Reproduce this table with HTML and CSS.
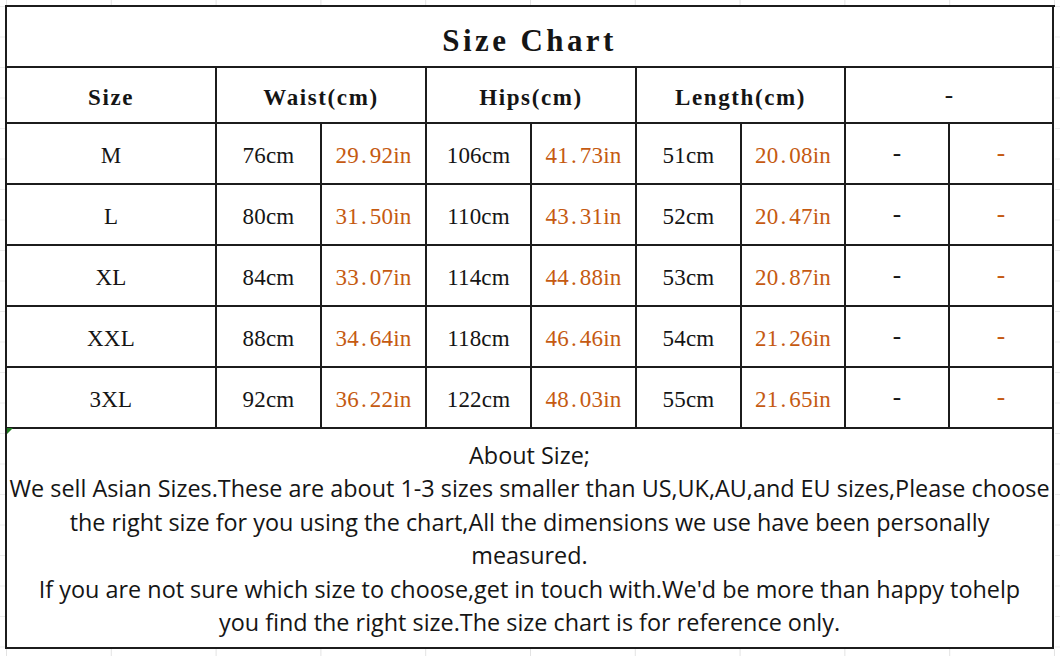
FILE: index.html
```html
<!DOCTYPE html>
<html lang="en">
<head>
<meta charset="utf-8">
<title>Size Chart</title>
<link rel="stylesheet" href="styles.css">
</head>
<body>
<div class="sheet">
  <div class="chart">
    <div class="cell title span10">Size Chart</div>

    <div class="cell head span2">Size</div>
    <div class="cell head span2">Waist(cm)</div>
    <div class="cell head span2">Hips(cm)</div>
    <div class="cell head span2">Length(cm)</div>
    <div class="cell head dash span2">-</div>

    <div class="cell size span2">M</div>
    <div class="cell num">76cm</div><div class="cell num in">29<span class="dot">.</span>92in</div>
    <div class="cell num">106cm</div><div class="cell num in">41<span class="dot">.</span>73in</div>
    <div class="cell num">51cm</div><div class="cell num in">20<span class="dot">.</span>08in</div>
    <div class="cell num dash">-</div><div class="cell num dash in">-</div>

    <div class="cell size span2">L</div>
    <div class="cell num">80cm</div><div class="cell num in">31<span class="dot">.</span>50in</div>
    <div class="cell num">110cm</div><div class="cell num in">43<span class="dot">.</span>31in</div>
    <div class="cell num">52cm</div><div class="cell num in">20<span class="dot">.</span>47in</div>
    <div class="cell num dash">-</div><div class="cell num dash in">-</div>

    <div class="cell size span2">XL</div>
    <div class="cell num">84cm</div><div class="cell num in">33<span class="dot">.</span>07in</div>
    <div class="cell num">114cm</div><div class="cell num in">44<span class="dot">.</span>88in</div>
    <div class="cell num">53cm</div><div class="cell num in">20<span class="dot">.</span>87in</div>
    <div class="cell num dash">-</div><div class="cell num dash in">-</div>

    <div class="cell size span2">XXL</div>
    <div class="cell num">88cm</div><div class="cell num in">34<span class="dot">.</span>64in</div>
    <div class="cell num">118cm</div><div class="cell num in">46<span class="dot">.</span>46in</div>
    <div class="cell num">54cm</div><div class="cell num in">21<span class="dot">.</span>26in</div>
    <div class="cell num dash">-</div><div class="cell num dash in">-</div>

    <div class="cell size span2">3XL</div>
    <div class="cell num">92cm</div><div class="cell num in">36<span class="dot">.</span>22in</div>
    <div class="cell num">122cm</div><div class="cell num in">48<span class="dot">.</span>03in</div>
    <div class="cell num">55cm</div><div class="cell num in">21<span class="dot">.</span>65in</div>
    <div class="cell num dash">-</div><div class="cell num dash in">-</div>

    <div class="cell notes span10">
      <span class="marker"></span>
      <p class="line">About Size;</p>
      <p class="line">We sell Asian Sizes.These are about 1-3 sizes smaller than US,UK,AU,and EU sizes,Please choose</p>
      <p class="line">the right size for you using the chart,All the dimensions we use have been personally</p>
      <p class="line">measured.</p>
      <p class="line">If you are not sure which size to choose,get in touch with.We'd be more than happy tohelp</p>
      <p class="line">you find the right size.The size chart is for reference only.</p>
    </div>
  </div>
</div>
</body>
</html>
```

FILE: styles.css
```css
html, body {
  margin: 0;
  padding: 0;
}

body {
  width: 1060px;
  height: 656px;
  overflow: hidden;
  background-color: #ffffff;
  background-image:
    linear-gradient(to right, #e3e3e3 1px, transparent 1px),
    linear-gradient(to bottom, #ececec 1px, transparent 1px);
  background-size: 104.8px 100%, 100% 30.5px;
  background-position: 6px 0, 0 6px;
  color: #151515;
}

.sheet {
  padding: 5px 0 0 5px;
}

.chart {
  display: grid;
  grid-template-columns: repeat(7, 105px) repeat(3, 104px);
  grid-template-rows: 61px 56px repeat(5, 61px) 220px;
  width: 1048px;
  border-left: 2px solid #1c1c1c;
  border-top: 2px solid #1c1c1c;
  background: #ffffff;
}

.cell {
  box-sizing: border-box;
  border-right: 2px solid #1c1c1c;
  border-bottom: 2px solid #1c1c1c;
  display: flex;
  align-items: center;
  justify-content: center;
  white-space: nowrap;
  background: #ffffff;
}

.span2 { grid-column: span 2; }
.span10 { grid-column: span 10; }

.title {
  font-family: "Liberation Serif", "Times New Roman", serif;
  font-weight: bold;
  font-size: 31px;
  letter-spacing: 3.4px;
  padding-top: 8px;
}

.head {
  font-family: "Liberation Serif", "Times New Roman", serif;
  font-weight: bold;
  font-size: 23px;
  letter-spacing: 1.6px;
  padding-top: 6px;
}

.size,
.num {
  font-family: "Liberation Serif", "Times New Roman", serif;
  font-size: 23px;
  letter-spacing: 0.2px;
  padding-top: 5px;
}

.cell.dash {
  font-family: "Liberation Mono", "Courier New", monospace;
  font-weight: normal;
  font-size: 24px;
  letter-spacing: 0;
  padding-top: 2px;
}

.dot {
  margin: 0 3px 0 2px;
}

.in {
  color: #c55a11;
}

.notes {
  position: relative;
  flex-direction: column;
  justify-content: center;
  font-family: "Open Sans", "Noto Sans", sans-serif;
  font-size: 23.4px;
  padding-top: 2px;
}

.line {
  margin: 0;
  line-height: 33.5px;
  text-align: center;
}

.marker {
  position: absolute;
  left: 0;
  top: -1px;
  width: 0;
  height: 0;
  border-top: 6px solid #1f7a1f;
  border-right: 6px solid transparent;
}
```
